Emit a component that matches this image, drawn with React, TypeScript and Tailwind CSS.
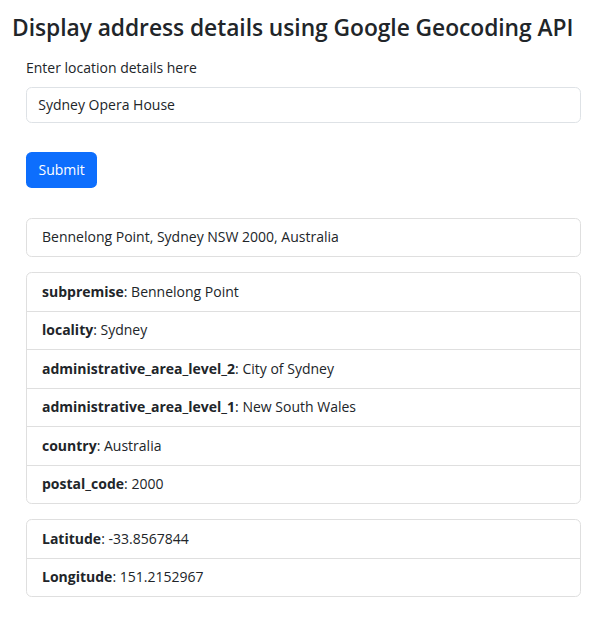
const components = [
  { key: "subpremise", value: "Bennelong Point" },
  { key: "locality", value: "Sydney" },
  { key: "administrative_area_level_2", value: "City of Sydney" },
  { key: "administrative_area_level_1", value: "New South Wales" },
  { key: "country", value: "Australia" },
  { key: "postal_code", value: "2000" },
]

const coords = [
  { key: "Latitude", value: "-33.8567844" },
  { key: "Longitude", value: "151.2152967" },
]

function ListGroup({ children }: { children: React.ReactNode }) {
  return (
    <ul className="border border-[#dfdfdf] rounded-[5.6px] bg-white">{children}</ul>
  )
}

function Item({ first, children }: { first?: boolean; children: React.ReactNode }) {
  return (
    <li className={first ? "px-[15px] py-[7.5px] leading-[22.5px]" : "px-[15px] py-[7.5px] leading-[22.5px] border-t border-[#dfdfdf]"}>
      {children}
    </li>
  )
}

export default function App() {
  return (
    <div className="min-h-screen bg-white text-[#212529] text-[14px] leading-[22.5px] font-['Open_Sans',sans-serif]">
      <div className="px-[12px] pt-[14px]">
        <h3 className="text-[22.8px] leading-[28px] font-semibold tracking-[-0.05px]">
          Display address details using Google Geocoding API
        </h3>
      </div>

      <div className="px-[26px] pr-[27px] pt-[15px]">
        <label className="block mb-[7.5px]">Enter location details here</label>
        <input
          type="text"
          defaultValue="Sydney Opera House"
          className="block w-full h-[35.6px] px-[11.25px] border border-[#dee2e6] rounded-[5.6px] outline-none text-[14px] text-[#212529]"
        />

        <button className="mt-[29.5px] h-[35.6px] px-[12.5px] bg-[#0d6efd] text-white rounded-[5.6px]">
          Submit
        </button>

        <div className="mt-[30px]">
          <ListGroup>
            <Item first>Bennelong Point, Sydney NSW 2000, Australia</Item>
          </ListGroup>
        </div>

        <div className="mt-[15px]">
          <ListGroup>
            {components.map((c, i) => (
              <Item key={c.key} first={i === 0}>
                <b className="font-bold">{c.key}</b>: {c.value}
              </Item>
            ))}
          </ListGroup>
        </div>

        <div className="mt-[15px]">
          <ListGroup>
            {coords.map((c, i) => (
              <Item key={c.key} first={i === 0}>
                <b className="font-bold">{c.key}</b>: {c.value}
              </Item>
            ))}
          </ListGroup>
        </div>
      </div>
    </div>
  )
}
